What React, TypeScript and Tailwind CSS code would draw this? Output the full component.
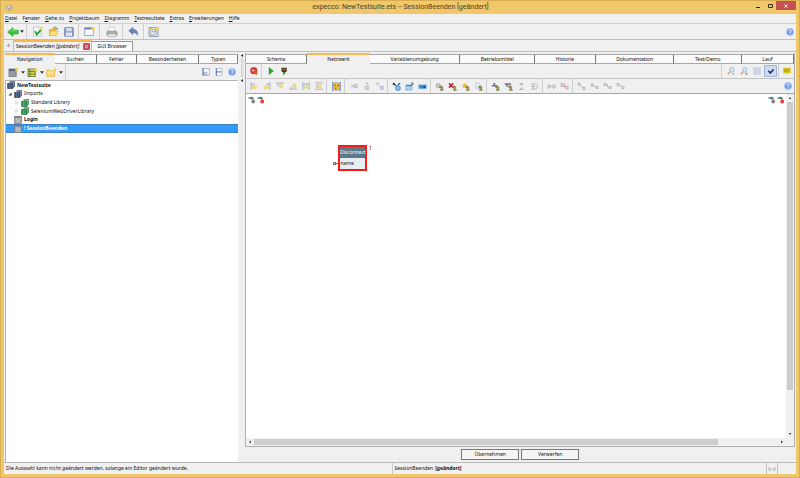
import { useState, type ReactNode } from "react";
import clsx from "clsx";

interface TabsProps {
  items: string[];
  active: string;
  label: string;
  onSelect: (item: string) => void;
}

const MENU: [string, string, string][] = [
  ["", "D", "atei"],
  ["F", "e", "nster"],
  ["", "G", "ehe zu"],
  ["", "P", "rojektbaum"],
  ["", "D", "iagramm"],
  ["", "T", "estresultate"],
  ["", "E", "xtras"],
  ["", "E", "rweiterungen"],
  ["", "H", "ilfe"],
];

const NAV_TABS = ["Navigation", "Suchen", "Fehler", "Besonderheiten", "Typen"];

const EDITOR_TABS = [
  "Schema",
  "Netzwerk",
  "Variablenumgebung",
  "Betriebsmittel",
  "Historie",
  "Dokumentation",
  "Test/Demo",
  "Lauf",
];

const Svg = ({ size, children }: { size: number; children: ReactNode }) => (
  <svg width={size} height={size} viewBox={`0 0 ${size} ${size}`} aria-hidden="true" className="shrink-0">
    {children}
  </svg>
);

const Star = ({ x, y }: { x: number; y: number }) => (
  <path
    d={`M${x} ${y - 2.2}l.7 1.4 1.5.2-1.1 1 .3 1.5-1.4-.8-1.4.8.3-1.5-1.1-1 1.5-.2z`}
    fill="#fbd23c"
  />
);

const BackIcon = () => (
  <svg width="12" height="10" viewBox="0 0 12 10" aria-hidden="true">
    <path d="M.6 5L6 .6v2.5h5.2v3.8H6v2.5z" fill="#3cc63c" stroke="#2a9d33" strokeWidth=".7" />
    <path d="M2.5 4.6L5.4 2.2v1.6h5" fill="none" stroke="#8bea80" strokeWidth=".7" />
  </svg>
);

const AcceptIcon = () => (
  <Svg size={11}>
    <path d="M1.5 1h6.2l1.6 1.6V10h-7.8z" fill="#f4f7fc" stroke="#a7b2c9" strokeWidth=".7" />
    <path d="M3 5.3l2 3.2 3.8-4.6" fill="none" stroke="#16a32b" strokeWidth="1.7" />
    <Star x={9} y={2.4} />
  </Svg>
);

const OpenIcon = () => (
  <Svg size={11}>
    <path d="M1 3h3l1-1h3v7.5H1z" fill="#e9b93d" />
    <path d="M1 9.6L3 5h7.3L8.4 9.6z" fill="#fbe27b" stroke="#d4a129" strokeWidth=".5" />
    <path d="M5 2.4C6.5.6 8.3.8 9 2.6" fill="none" stroke="#4fae40" strokeWidth="1" />
    <path d="M7.6 2.4h2.8L9.1 4.3z" fill="#4fae40" />
  </Svg>
);

const SaveIcon = () => (
  <Svg size={10}>
    <rect x=".6" y=".6" width="8.8" height="8.8" rx=".8" fill="#8a9cc6" stroke="#697ba9" strokeWidth=".7" />
    <rect x="2.2" y="1" width="5.6" height="3.3" fill="#d6def0" />
    <rect x="2" y="5.6" width="6" height="3.6" fill="#f3f5fa" />
    <path d="M2.8 7h4.4M2.8 8.2h4.4" stroke="#a4aec8" strokeWidth=".5" />
  </Svg>
);

const WindowIcon = () => (
  <Svg size={11}>
    <rect x=".7" y="1.8" width="8.6" height="7.6" fill="#f8f9fd" stroke="#8c97bb" strokeWidth=".8" />
    <path d="M.7 2.6h8.6" stroke="#6276ad" strokeWidth="1.5" />
    <Star x={9} y={2.6} />
  </Svg>
);

const PrinterIcon = () => (
  <Svg size={12}>
    <path d="M3.4.8h4.5l1 4.6H2.6z" fill="#fafafa" stroke="#a9a9a9" strokeWidth=".5" />
    <path d="M1 5.2h9.6l.8 3.8H.6z" fill="#a8abb0" stroke="#85888d" strokeWidth=".5" />
    <path d="M2.4 7.8h7.4l.6 3H1.8z" fill="#e5e5e5" stroke="#999" strokeWidth=".5" />
    <circle cx="9.4" cy="6.6" r=".6" fill="#67c25b" />
  </Svg>
);

const UndoIcon = () => (
  <Svg size={11}>
    <path d="M.8 4.7L4.8 1.3v2.1c3.2-.1 5.3 1.6 4.7 5.9-.8-2-2-2.8-4.7-2.7v2z" fill="#6a82b5" stroke="#4a639c" strokeWidth=".5" />
  </Svg>
);

const ReportIcon = () => (
  <Svg size={12}>
    <rect x="1" y="1.4" width="9" height="9" fill="#dce7f6" stroke="#7891b6" strokeWidth=".8" />
    <circle cx="5.2" cy="6.2" r="2.9" fill="#fdf7d1" stroke="#5b86c2" strokeWidth=".7" />
    <path d="M4 5l1.5 1.5L9 3" fill="none" stroke="#4a71ae" strokeWidth=".8" />
    <path d="M1.4 9.5h3M1.3 2.5h3" stroke="#efc13c" strokeWidth="1" />
    <Star x={9.4} y={2.4} />
  </Svg>
);

const HelpIcon = () => (
  <Svg size={8}>
    <circle cx="4" cy="4" r="3.5" fill="#6b9af0" stroke="#a3bff3" strokeWidth=".8" />
    <path d="M2.7 3.1c.2-1.5 2.6-1.4 2.5 0C5.1 4 4 3.9 4 5" fill="none" stroke="#fff" strokeWidth=".9" />
    <circle cx="4" cy="6.1" r=".5" fill="#fff" />
  </Svg>
);

const GridIcon = () => (
  <Svg size={8}>
    <rect x=".4" y=".4" width="7.2" height="7.2" fill="#a5a5a5" stroke="#7f7f7f" strokeWidth=".7" />
    <path d="M.5 1h7" stroke="#6a7482" strokeWidth="1" />
    <path d="M2 2.6h1.2v1.2H2zM4.8 2.6H6v1.2H4.8zM3.4 4h1.2v1.2H3.4zM2 5.4h1.2v1.2H2zM4.8 5.4H6v1.2H4.8z" fill="#dedede" />
  </Svg>
);

const BooksIcon = ({ green = false }: { green?: boolean }) => (
  <Svg size={8}>
    <path d="M2.4 1L3.6.3h4v5L6 7" fill={green ? "#7fbe91" : "#8796b4"} stroke={green ? "#226c3c" : "#2c3b5c"} strokeWidth=".6" />
    <path d="M.6 2.3h5.2v5.2H.6z" fill={green ? "#23874a" : "#3c5078"} stroke={green ? "#145c2e" : "#212e4b"} strokeWidth=".6" />
    <path d="M2.3 2.5v5M4.1 2.5v5" stroke={green ? "#9ad6ab" : "#8191b2"} strokeWidth=".5" />
  </Svg>
);

const NewBlockIcon = () => (
  <Svg size={11}>
    <rect x="1" y="2" width="7.2" height="7.5" fill="#8d939b" stroke="#666d77" strokeWidth=".7" />
    <path d="M1 3h7" stroke="#4d5866" strokeWidth="1.3" />
    <path d="M2.2 5h5M2.2 6.6h5M2.2 8.2h5" stroke="#c3c7cd" strokeWidth=".6" strokeDasharray="1 .7" />
    <Star x={8.8} y={2.6} />
  </Svg>
);

const NewListIcon = () => (
  <Svg size={11}>
    <rect x="1" y="2" width="7.2" height="7.5" fill="#d7dc4e" stroke="#5c6d3d" strokeWidth=".8" />
    <path d="M1 4.5h7M1 7h7M3 2v7.5" stroke="#57703b" strokeWidth=".8" />
    <Star x={8.8} y={2.6} />
  </Svg>
);

const NewFolderIcon = () => (
  <Svg size={11}>
    <path d="M.8 3h3l.8 1h4v5.4H.8z" fill="#fbdf72" stroke="#e1a932" strokeWidth=".7" />
    <path d="M1.3 5.2h6.8" stroke="#fff3b7" strokeWidth=".8" />
    <Star x={8.8} y={2.6} />
  </Svg>
);

const PaneIcon = ({ split = false }: { split?: boolean }) => (
  <Svg size={8}>
    {split ? (
      <>
        <rect x="1" y=".5" width="6" height="7" fill="#f8f9fc" stroke="#a0acca" strokeWidth=".6" />
        <path d="M1.2 3.9h5.8M1.4.5v7" stroke="#647bb0" strokeWidth="1" />
      </>
    ) : (
      <>
        <rect x=".5" y=".5" width="7" height="6.6" fill="#f8f9fc" stroke="#8e9cc0" strokeWidth=".7" />
        <path d="M1.2.6v6.6" stroke="#647bb0" strokeWidth="1" />
        <path d="M2.4 4.4h2.4v3H2.4z" fill="#c8d0e3" stroke="#7d8cb3" strokeWidth=".5" />
      </>
    )}
  </Svg>
);

const RecordIcon = () => (
  <Svg size={8}>
    <circle cx="3.8" cy="3.7" r="3.4" fill="#e23636" stroke="#c42f2f" strokeWidth=".4" />
    <path d="M2 2.8h2.6v1.5H2z" fill="#f9c3ba" />
    <path d="M4.6 4.4h1.6l1.2 1.4v1.9H5.6z" fill="#a8773f" />
  </Svg>
);

const PlayIcon = () => (
  <Svg size={8}>
    <path d="M2 .5l4.5 3.5L2 7.5z" fill="#2da52d" stroke="#17841f" strokeWidth=".4" />
  </Svg>
);

const DebugIcon = () => (
  <Svg size={8}>
    <path d="M1.4.8h5.4v3.4L5 5.6l.3.9-2.2 1.2.3-2.4-1.8-.9z" fill="#24381c" />
    <path d="M1.6 1.2l2 2.6M3.2 7.2L5 5" stroke="#3ea037" strokeWidth="1" />
    <circle cx="5" cy="2.4" r="1.4" fill="#d23a2a" />
  </Svg>
);

const ZoomIcon = ({ out = false }: { out?: boolean }) => (
  <Svg size={8}>
    <path d="M.8 7.3L3.4 4.6" stroke="#d69a70" strokeWidth="1.3" />
    <circle cx="4.8" cy="2.9" r="2.2" fill="#d6ebf7" stroke="#8fafc9" strokeWidth=".8" />
    <path d={out ? "M5.3 6.8h2.2M6.4 5.7v2" : "M5.3 6.8h2.2"} stroke="#67788a" strokeWidth=".8" />
  </Svg>
);

const MeshIcon = () => (
  <Svg size={8}>
    <rect width="8" height="8" fill="#d7dce7" />
    <path d="M2 0v8M4 0v8M6 0v8M0 2h8M0 4h8M0 6h8" stroke="#c4cada" strokeWidth=".5" />
  </Svg>
);

const CheckIcon = () => (
  <Svg size={8}>
    <path d="M1.3 3.8l2 2.2 3.3-3.6" fill="none" stroke="#28356e" strokeWidth="1.6" />
  </Svg>
);

const NoteIcon = () => (
  <Svg size={8}>
    <path d="M.4 1h7.2v5H4.4L3.3 7.2 3 6H.4z" fill="#e4ca24" stroke="#c9ac16" strokeWidth=".4" />
    <path d="M1.7 2.6h1.5v1.6H1.7zM4 2.7h2.4M4 4.1h1.8" fill="none" stroke="#8c7a19" strokeWidth=".6" />
  </Svg>
);

type Align = "left" | "right" | "top" | "bottom" | "hfill" | "vfill";

const ALIGN_LINES: Record<Align, string> = {
  left: "M1 0v8",
  right: "M7 0v8",
  top: "M0 1h8",
  bottom: "M0 7h8",
  hfill: "M.8 0v8M7.2 0v8",
  vfill: "M0 .8h8M0 7.2h8",
};

const ALIGN_SHADES: Record<Align, string> = {
  left: "M1.6 1h3.2v2.4H1.6z",
  right: "M3.2 1h3.2v2.4H3.2z",
  top: "M1.2 1.6h2v3h-2z",
  bottom: "M1.2 4.6h2v2h-2z",
  hfill: "M1.4 1h5.2v2H1.4z",
  vfill: "M1 1.4h1.6v5.2H1z",
};

const ALIGN_BOXES: Record<Align, [number, number, number, number]> = {
  left: [1.8, 3.6, 5, 3.4],
  right: [1.2, 3.6, 5, 3.4],
  top: [3.4, 1.8, 3.6, 4],
  bottom: [3.6, 1.6, 3.6, 4.8],
  hfill: [1.6, 3.4, 4.8, 3],
  vfill: [2.6, 1.6, 3.8, 4.8],
};

const AlignIcon = ({ kind }: { kind: Align }) => {
  const [x, y, width, height] = ALIGN_BOXES[kind];
  return (
    <Svg size={8}>
      <path d={ALIGN_SHADES[kind]} fill="#c5cadb" />
      <path d={ALIGN_LINES[kind]} stroke="#aeb5cd" strokeWidth="1.1" />
      <rect x={x} y={y} width={width} height={height} fill="#ecd88a" />
    </Svg>
  );
};

const LayoutIcon = () => (
  <Svg size={9}>
    <rect x="1" y=".8" width="7" height="7.4" fill="#f2c33b" />
    <path d="M.8 0v9M8.2 0v9" stroke="#7c90bb" strokeWidth="1.2" />
    <path d="M1.6.6h5.8M1.6 8.4h5.8" stroke="#8fa0c4" strokeWidth=".6" />
    <path d="M2.5 2.4h1.4v1.4H2.5zM5.4 2.8h1.4v1.4H5.4zM3 5.6h1.4V7H3z" fill="#6a5d33" />
  </Svg>
);

// faded pins that are waiting for a selection
const PIN_PATHS = {
  in: "M.3 4h3M1.8 2.8L3.2 4 1.8 5.2M4 2.4h3.4v3.2H4z",
  up: "M4 .4v3.2M2.8 1.8L4 .5l1.2 1.3M2.3 4.2h3.4v3.2H2.3z",
  free: "M.6 1l3.3 3M1 3.2V1h2.2M4.3 4.2h3.1v3.1H4.3z",
};

const PinIcon = ({ kind }: { kind: keyof typeof PIN_PATHS }) => (
  <Svg size={8}>
    <path d={PIN_PATHS[kind]} fill="#ccd1e1" stroke="#b0b7ca" strokeWidth=".7" />
  </Svg>
);

const StepIcon = ({ kind }: { kind: "link" | "box" | "wide" }) => (
  <Svg size={9}>
    {kind === "link" && (
      <>
        <path d="M1 1.2l3.5 3M1 2.8L2.6 1M8 1L5.6 3.6" fill="none" stroke="#26355c" strokeWidth="1.1" />
        <rect x="3.8" y="4.2" width="4.4" height="4" rx="1" fill="#8abdf0" stroke="#3b82cc" strokeWidth=".8" />
      </>
    )}
    {kind === "box" && (
      <>
        <rect x="1" y="3" width="6" height="5" fill="#a8d1f6" stroke="#6eaee6" strokeWidth=".8" />
        <path d="M1 3.5h6" stroke="#3282cd" strokeWidth="1" />
        <path d="M5 4.4L8 1.2M6 1h2v2" fill="none" stroke="#48556c" strokeWidth=".8" />
      </>
    )}
    {kind === "wide" && (
      <>
        <rect x=".7" y="2.8" width="7.8" height="4" fill="#4b98e0" stroke="#8abceb" strokeWidth=".6" />
        <path d="M3.4 4.9h4M5.9 3.6L7.4 4.9 5.9 6.2" fill="none" stroke="#173d68" strokeWidth=".8" />
      </>
    )}
  </Svg>
);

const Hand = () => (
  <path d="M4.7 4.1h2.4l1 1.2-.7 1 .9 1v1.2H5.5V7.2l1-.8-1.8-.6z" fill="#a28f50" stroke="#7b6d3d" strokeWidth=".4" />
);

const BreakIcon = ({ kind }: { kind: "off" | "delete" | "star" | "page" }) => (
  <Svg size={9}>
    {kind === "off" && <circle cx="3.2" cy="3.6" r="2.2" fill="#c8c8c8" stroke="#a0a0a0" strokeWidth=".7" />}
    {kind === "delete" && <path d="M1 1.4l4.2 4.2M5.2 1.4L1 5.6" stroke="#b92633" strokeWidth="1.6" />}
    {kind === "star" && <path d="M3.7.8l1 1.7 2.1.2-1.4 1.5.4 2-2.1-.8-1.9.8.2-2L.5 3l2.2-.5z" fill="#f2c223" />}
    {kind === "page" && <path d="M1.7 1.2h4.4v5.2H1.7z" fill="#e5effa" stroke="#acc8e5" strokeWidth=".7" />}
    <Hand />
  </Svg>
);

const RouteIcon = ({ down = false }: { down?: boolean }) => (
  <Svg size={9}>
    <path d={down ? "M.8 2h5.4v1.6M3 2v2.6" : "M.8 3.8h5.4M3.4 4V1.4"} fill="none" stroke="#67749b" strokeWidth="1.4" />
    <path d={down ? "M2.2 3.8h2" : "M2.4 1.6h2"} stroke="#b0505d" strokeWidth="1" />
    <Hand />
  </Svg>
);

const WireIcon = ({ d, accent }: { d: string; accent?: string }) => (
  <Svg size={9}>
    <path d={d} fill="none" stroke="#b0b0b8" strokeWidth=".9" />
    {accent && <path d={accent} stroke="#d9a0a6" strokeWidth="1" />}
  </Svg>
);

const TrafficPinIcon = ({ color }: { color: string }) => (
  <Svg size={8}>
    <path d="M.6 2h4.2" fill="none" stroke="#35706b" strokeWidth="1.4" />
    <path d="M3.2.6l2.2 1.4-2.2 1.4z" fill="#35706b" />
    <path d="M5.2 1.8v2.6" stroke="#526060" strokeWidth=".8" />
    <circle cx="5.2" cy="5.5" r="1.9" fill={color} />
  </Svg>
);

const CaretDown = () => (
  <svg width="4" height="3" viewBox="0 0 4 3" aria-hidden="true">
    <path d="M0 .3h4L2 2.7z" fill="#333" />
  </svg>
);

const ToolButton = ({
  label,
  width = "w-[13px]",
  pressed,
  children,
}: {
  label: string;
  width?: string;
  pressed?: boolean;
  children: ReactNode;
}) => (
  <button
    type="button"
    aria-label={label}
    aria-pressed={pressed}
    className={clsx(
      "h-3 shrink-0 flex items-center justify-center",
      width,
      pressed && "bg-[#cbdcf2] border border-[#9fb6d8]",
    )}
  >
    {children}
  </button>
);

const ToolGroup = ({ last = false, children }: { last?: boolean; children: ReactNode }) => (
  <div
    className={clsx(
      "self-stretch flex items-center shrink-0 pl-[2px] pr-px",
      !last && "border-r border-[#cfcfcf]",
    )}
  >
    {children}
  </div>
);

const Tabs = ({ items, active, label, onSelect }: TabsProps) => (
  <div role="tablist" aria-label={label} className="h-[11px] shrink-0 flex items-end">
    {items.map((item) => (
      <button
        key={item}
        type="button"
        role="tab"
        aria-selected={item === active}
        onClick={() => onSelect(item)}
        className={clsx(
          "flex-auto flex items-center justify-center",
          item === active
            ? "h-[11px] bg-[#f0f0f0] border-t-2 border-[#fbb64e]"
            : "h-[10px] bg-[#fafafa] border-y border-r border-y-[#a8a8a8] border-r-[#777]",
        )}
      >
        {item}
      </button>
    ))}
  </div>
);

const TREE_ROW = "flex items-center gap-[2px] min-w-0 whitespace-nowrap";

const Twisty = ({ open = false }: { open?: boolean }) => (
  <svg width="4" height="4" viewBox="0 0 4 4" aria-hidden="true">
    {open ? <path d="M3.6.4v3.2H.4z" fill="#333" /> : <path d="M.8.4L3 2 .8 3.6z" fill="#fff" stroke="#aaa" strokeWidth=".5" />}
  </svg>
);

const ProjectTree = () => (
  <div className="flex-1 bg-white border-l border-t border-[#b4b4b4]">
    <div role="tree" aria-label="Projektbaum" className="grid grid-rows-6 h-[52px]">
      <div role="treeitem" className={clsx(TREE_ROW, "pl-px font-bold")}>
        <BooksIcon />
        NewTestsuite
      </div>
      <div role="treeitem" aria-expanded="true" className={clsx(TREE_ROW, "pl-[2px]")}>
        <Twisty open />
        <BooksIcon />
        Imports
      </div>
      <div role="treeitem" aria-expanded="false" className={clsx(TREE_ROW, "pl-[9px]")}>
        <Twisty />
        <BooksIcon green />
        Standard Library
      </div>
      <div role="treeitem" aria-expanded="false" className={clsx(TREE_ROW, "pl-[9px]")}>
        <Twisty />
        <BooksIcon green />
        SeleniumWebDriverLibrary
      </div>
      <div role="treeitem" className={clsx(TREE_ROW, "pl-2 font-bold")}>
        <GridIcon />
        Login
      </div>
      <div
        role="treeitem"
        aria-selected="true"
        className={clsx(TREE_ROW, "pl-2 font-bold bg-[#3399ff] text-white border-y border-[#3f83c4]")}
      >
        <GridIcon />
        ! SessionBeenden
      </div>
    </div>
  </div>
);

const NavigationPane = () => {
  const [tab, setTab] = useState("Navigation");

  return (
    <aside className="flex-[234] min-w-0 pl-px flex flex-col">
      <Tabs items={NAV_TABS} active={tab} label="Projekt" onSelect={setTab} />
      <div className="h-4 shrink-0 flex items-center">
        <ToolGroup>
          <ToolButton label="Neuer Baustein"><NewBlockIcon /></ToolButton>
          <ToolButton label="Bausteinarten" width="w-[6px]"><CaretDown /></ToolButton>
          <ToolButton label="Neuer Testplan"><NewListIcon /></ToolButton>
          <ToolButton label="Testplanarten" width="w-[6px]"><CaretDown /></ToolButton>
          <ToolButton label="Neuer Ordner"><NewFolderIcon /></ToolButton>
          <ToolButton label="Ordnerarten" width="w-[6px]"><CaretDown /></ToolButton>
        </ToolGroup>
        <div className="flex-1" />
        <ToolButton label="Fenster"><PaneIcon /></ToolButton>
        <ToolButton label="Geteilt"><PaneIcon split /></ToolButton>
        <ToolButton label="Hilfe zur Navigation"><HelpIcon /></ToolButton>
      </div>
      <ProjectTree />
    </aside>
  );
};

const Splitter = () => (
  <div className="w-[7px] shrink-0 flex justify-center">
    <svg width="5" height="34" viewBox="0 0 5 34" aria-hidden="true">
      <path d="M4 1v3L1.8 2.5zM4 26v3l-2.2-1.5z" fill="#222" />
      <path d="M2.5 5v20M4 5.5v20" stroke="#aaa" strokeWidth=".8" strokeDasharray="1 1" />
    </svg>
  </div>
);

const EditorToolbar = () => (
  <div className="h-[15px] shrink-0 flex items-center border-b border-[#c4c4c4]">
    <ToolGroup><ToolButton label="Haltepunkt" width="w-3"><RecordIcon /></ToolButton></ToolGroup>
    <ToolGroup last>
      <ToolButton label="Ausführen"><PlayIcon /></ToolButton>
      <ToolButton label="Debuggen"><DebugIcon /></ToolButton>
    </ToolGroup>
    <div className="flex-1 self-stretch border-r border-[#cfcfcf]" />
    <ToolGroup>
      <ToolButton label="Vergrößern"><ZoomIcon /></ToolButton>
      <ToolButton label="Verkleinern"><ZoomIcon out /></ToolButton>
      <ToolButton label="Raster" width="w-[14px]"><MeshIcon /></ToolButton>
      <ToolButton label="Ausrichten" pressed><CheckIcon /></ToolButton>
    </ToolGroup>
    <ToolGroup last><ToolButton label="Notiz" width="w-3"><NoteIcon /></ToolButton></ToolGroup>
  </div>
);

const DiagramToolbar = () => (
  <div className="h-[14px] shrink-0 flex items-center">
    <ToolGroup>
      <ToolButton label="Linksbündig" width="w-3"><AlignIcon kind="left" /></ToolButton>
      <ToolButton label="Rechtsbündig"><AlignIcon kind="right" /></ToolButton>
      <ToolButton label="Oben ausrichten"><AlignIcon kind="top" /></ToolButton>
      <ToolButton label="Unten ausrichten"><AlignIcon kind="bottom" /></ToolButton>
      <ToolButton label="Gleiche Breite"><AlignIcon kind="hfill" /></ToolButton>
      <ToolButton label="Gleiche Höhe"><AlignIcon kind="vfill" /></ToolButton>
    </ToolGroup>
    <ToolGroup><ToolButton label="Layout" width="w-[14px]"><LayoutIcon /></ToolButton></ToolGroup>
    <ToolGroup>
      <ToolButton label="Eingangspin"><PinIcon kind="in" /></ToolButton>
      <ToolButton label="Ausgangspin"><PinIcon kind="up" /></ToolButton>
      <ToolButton label="Freier Pin"><PinIcon kind="free" /></ToolButton>
    </ToolGroup>
    <ToolGroup>
      <ToolButton label="Schritt verbinden"><StepIcon kind="link" /></ToolButton>
      <ToolButton label="Neuer Schritt"><StepIcon kind="box" /></ToolButton>
      <ToolButton label="Schritt einfügen"><StepIcon kind="wide" /></ToolButton>
    </ToolGroup>
    <ToolGroup>
      <ToolButton label="Deaktivieren"><BreakIcon kind="off" /></ToolButton>
      <ToolButton label="Löschen"><BreakIcon kind="delete" /></ToolButton>
      <ToolButton label="Hervorheben"><BreakIcon kind="star" /></ToolButton>
      <ToolButton label="Kopieren"><BreakIcon kind="page" /></ToolButton>
    </ToolGroup>
    <ToolGroup>
      <ToolButton label="Nach oben"><RouteIcon /></ToolButton>
      <ToolButton label="Nach unten"><RouteIcon down /></ToolButton>
      <ToolButton label="Vertikal"><WireIcon d="M2.5 1.5h4M2.5 7.5h4M3.2 1.8l1.3 1.7 1.3-1.7M3.2 7.2l1.3-1.7 1.3 1.7" /></ToolButton>
      <ToolButton label="Horizontal"><WireIcon d="M1.3 2h4.2c2.5 0 2.5 5 0 5H1.3M3 2v5M1.3 4.5h3.8" /></ToolButton>
    </ToolGroup>
    <ToolGroup>
      <ToolButton label="Verbinden"><WireIcon d="M1 3v3h2V3zM6 3v3h2V3z" accent="M3.5 4.5h2" /></ToolButton>
      <ToolButton label="Trennen"><WireIcon d="M1 1.5v3h2v-3zM6 4v3h2V4zM3 3.5l3 2" accent="M4.5 1.3v4" /></ToolButton>
    </ToolGroup>
    <ToolGroup last>
      <ToolButton label="Kurve"><WireIcon d="M1 1v2h2V1zM3 2.5l3 3.5M6 5.5v2h2v-2z" /></ToolButton>
      <ToolButton label="Linie"><WireIcon d="M1 2v2h2V2zM3 3.5l3 1.5M6 4.5v2h2v-2z" /></ToolButton>
      <ToolButton label="Stufe"><WireIcon d="M1 1.5v2h2v-2zM3 2.5h1.5V5H6M6 4.5v2h2v-2z" /></ToolButton>
      <ToolButton label="Winkel"><WireIcon d="M1 1.5v2h2v-2zM3 4h3M6 4.5v2h2v-2z" /></ToolButton>
    </ToolGroup>
    <div className="flex-1" />
    <ToolButton label="Hilfe zum Editor"><HelpIcon /></ToolButton>
  </div>
);

const Arrow = ({ d }: { d: string }) => (
  <svg width="8" height="8" viewBox="0 0 8 8" aria-hidden="true" className="shrink-0">
    <path d={d} fill="#444" />
  </svg>
);

const Canvas = () => (
  <div className="flex-1 min-h-0 border-t border-[#a6a6a6] grid grid-cols-[1fr_8px] grid-rows-[1fr_8px]">
    <div className="relative bg-white overflow-hidden">
      <div className="flex px-px">
        <ToolButton label="Eingang" width="w-[9px]"><TrafficPinIcon color="#858585" /></ToolButton>
        <ToolButton label="Eingang Fehler" width="w-[9px]"><TrafficPinIcon color="#ef3535" /></ToolButton>
        <div className="flex-1" />
        <ToolButton label="Ausgang" width="w-[9px]"><TrafficPinIcon color="#858585" /></ToolButton>
        <ToolButton label="Ausgang Fehler" width="w-[9px]"><TrafficPinIcon color="#ef3535" /></ToolButton>
      </div>
      <div className="absolute left-[87px] top-[51px] flex">
        <svg width="5" height="26" viewBox="0 0 5 26" aria-hidden="true">
          <path d="M.6 17.6h2v2h-2zM2.6 18.6H5" fill="none" stroke="#333" strokeWidth=".8" />
        </svg>
        <div className="w-[29px] h-[26px] border-2 border-[#fb1a1a] flex flex-col">
          <div className="h-[11px] bg-[#5d7a8c] text-[#f2f8fb] flex items-center justify-center">Disconnect</div>
          <div className="flex-1 bg-[#e8edf1] flex items-center">name</div>
        </div>
        <span className="pl-[2px] text-[6px] leading-[6px] font-bold text-[#fb0d0d]">!</span>
      </div>
    </div>
    <div className="bg-[#f0f0f0] flex flex-col">
      <Arrow d="M2.6 5L4 3l1.4 2z" />
      <div className="flex-[289] bg-[#cdcdcd] mx-px" />
      <div className="flex-[40]" />
      <Arrow d="M2.6 3L4 5l1.4-2z" />
    </div>
    <div className="bg-[#f0f0f0] flex">
      <Arrow d="M5 2.6L3 4l2 1.4z" />
      <div className="flex-[464] bg-[#cdcdcd] my-px" />
      <div className="flex-[60]" />
      <Arrow d="M3 2.6L5 4 3 5.4z" />
    </div>
  </div>
);

const EditorPane = () => {
  const [tab, setTab] = useState("Netzwerk");

  return (
    <main className="flex-[551] min-w-0 flex flex-col pr-px">
      <div className="flex-1 min-h-0 flex flex-col border-x border-b border-[#b0b0b0]">
        <Tabs items={EDITOR_TABS} active={tab} label="Editor" onSelect={setTab} />
        <EditorToolbar />
        <DiagramToolbar />
        <Canvas />
      </div>
      <div className="h-[15px] shrink-0 flex justify-center items-center gap-[2px]">
        <button type="button" className="w-[58px] h-[11px] bg-[#f4f4f4] border border-[#777] flex items-center justify-center">
          Übernehmen
        </button>
        <button type="button" className="w-[58px] h-[11px] bg-[#f4f4f4] border border-[#777] flex items-center justify-center">
          Verwerfen
        </button>
      </div>
    </main>
  );
};

const TitleBar = () => (
  <header className="h-[13px] shrink-0 flex items-center justify-center">
    <div className="flex-1 pl-px">
      <Svg size={8}>
        <path d="M1 2.5l4.5-1.3 1.8 3.3L3.6 7 1.4 5.5z" fill="#dcdcd3" stroke="#999787" strokeWidth=".6" />
        <path d="M2.5 3.5l1.5 1.7 2-2.7" fill="none" stroke="#c7616a" strokeWidth=".8" />
        <path d="M3.5 6.5L6.8 5" stroke="#69a36f" strokeWidth=".8" />
      </Svg>
    </div>
    <h1 className="font-[Roboto,sans-serif] text-[7px] text-[#4d421f]">
      expecco: NewTestsuite.ets -- SessionBeenden [geändert]
    </h1>
    <div className="flex-1 self-start flex justify-end">
      <button type="button" aria-label="Minimieren" className="w-3 h-[9px] flex items-center justify-center">
        <svg width="4" height="6" viewBox="0 0 4 6"><path d="M0 4.5h4" stroke="#222" /></svg>
      </button>
      <button type="button" aria-label="Maximieren" className="w-3 h-[9px] flex items-center justify-center">
        <svg width="5" height="4" viewBox="0 0 5 4"><path d="M.5.5h4v3h-4z" fill="none" stroke="#33301c" /></svg>
      </button>
      <button type="button" aria-label="Schließen" className="w-5 h-[9px] bg-[#c75050] flex items-center justify-center">
        <svg width="4" height="4" viewBox="0 0 4 4"><path d="M.3.3l3.4 3.4M3.7.3L.3 3.7" stroke="#fff" strokeWidth=".9" /></svg>
      </button>
    </div>
  </header>
);

const MainToolbar = () => (
  <div className="h-4 shrink-0 flex items-center border-b border-[#bfbfbf]">
    <ToolGroup>
      <ToolButton label="Zurück"><BackIcon /></ToolButton>
      <ToolButton label="Verlauf" width="w-[6px]"><CaretDown /></ToolButton>
    </ToolGroup>
    <ToolGroup>
      <ToolButton label="Neue Testsuite" width="w-4"><AcceptIcon /></ToolButton>
      <ToolButton label="Öffnen" width="w-4"><OpenIcon /></ToolButton>
      <ToolButton label="Speichern" width="w-4"><SaveIcon /></ToolButton>
    </ToolGroup>
    <ToolGroup><ToolButton label="Neues Fenster" width="w-[17px]"><WindowIcon /></ToolButton></ToolGroup>
    <ToolGroup><ToolButton label="Drucken" width="w-[19px]"><PrinterIcon /></ToolButton></ToolGroup>
    <ToolGroup><ToolButton label="Rückgängig" width="w-[17px]"><UndoIcon /></ToolButton></ToolGroup>
    <ToolGroup last><ToolButton label="Bericht" width="w-4"><ReportIcon /></ToolButton></ToolGroup>
    <div className="flex-1" />
    <ToolButton label="Hilfe"><HelpIcon /></ToolButton>
  </div>
);

const DocumentTabs = () => (
  <div className="h-3 shrink-0 flex items-end border-b border-[#bdbdbd]">
    <button type="button" aria-label="Neuer Tab" className="w-[9px] h-[11px] flex items-center justify-center">
      <svg width="5" height="5" viewBox="0 0 5 5"><path d="M2.5.5v4M.5 2.5h4" stroke="#aaa" strokeWidth="1.2" /></svg>
    </button>
    <div className="h-[11px] border-t-2 border-t-[#fbb64e] border-x border-x-[#bdbdbd] flex items-center pl-[2px] pr-px">
      <button type="button">
        SessionBeenden <i>[geändert]</i>
      </button>
      <button type="button" aria-label="Tab schließen" className="ml-1 w-[7px] h-[7px] rounded-[1px] bg-[#d9485a] flex items-center justify-center">
        <svg width="3" height="3" viewBox="0 0 3 3"><path d="M.2.2l2.6 2.6M2.8.2L.2 2.8" stroke="#fff" strokeWidth=".8" /></svg>
      </button>
    </div>
    <button type="button" className="h-[10px] px-[5px] bg-[#fafafa] border-t border-r border-[#9a9a9a]">
      GUI Browser
    </button>
  </div>
);

const StatusBar = () => (
  <footer className="h-3 shrink-0 flex items-center border-t border-[#b9b9b9]">
    <span className="flex-[387] pl-[2px]">
      Die Auswahl kann nicht geändert werden, solange ein Editor geändert wurde.
    </span>
    <span className="flex-[372] self-stretch border-l border-[#c9c9c9] pl-px flex items-center gap-[2px]">
      SessionBeenden <b>[geändert]</b>
    </span>
    <span className="w-3 self-stretch border-x border-[#c4c4c4] flex items-center justify-center">
      <svg width="8" height="6" viewBox="0 0 8 6" aria-hidden="true">
        <path d="M1 .8v3.5L2.3 5M7 .8v3.5L5.7 5M1.8 3h4.4" fill="none" stroke="#a2a2a2" strokeWidth=".8" />
      </svg>
    </span>
    <span className="w-[18px]" />
  </footer>
);

export default function App() {
  return (
    <div className="h-screen flex flex-col bg-[#f0c76a] border border-[#d9ae52] px-[3px] pb-[3px] font-['Noto_Sans','Open_Sans',sans-serif] text-[5px] leading-[7px] text-[#111]">
      <TitleBar />
      <div className="flex-1 min-h-0 flex flex-col bg-[#f0f0f0]">
        <nav aria-label="Hauptmenü" className="h-[10px] shrink-0 flex items-center gap-[5px] px-px border-b border-[#cfcfcf]">
          {MENU.map(([before, key, after]) => (
            <button key={before + key + after} type="button">
              {before}
              <u>{key}</u>
              {after}
            </button>
          ))}
        </nav>
        <MainToolbar />
        <DocumentTabs />
        <div className="flex-1 min-h-0 flex pt-px">
          <NavigationPane />
          <Splitter />
          <EditorPane />
        </div>
        <StatusBar />
      </div>
    </div>
  );
}
